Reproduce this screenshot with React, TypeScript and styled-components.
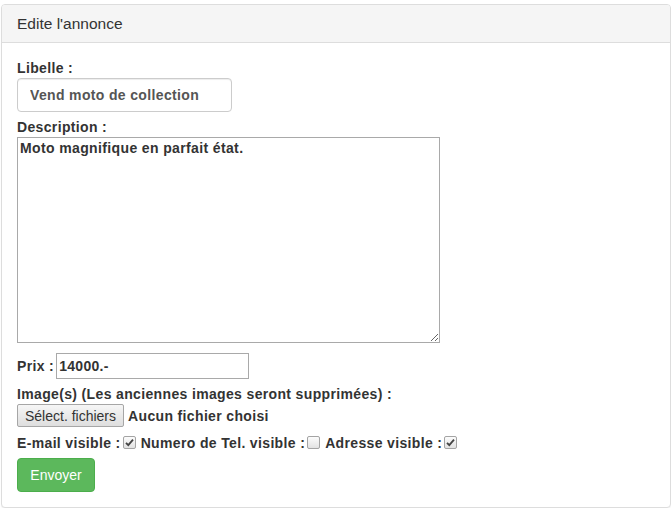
import React from "react";
import styled, { createGlobalStyle } from "styled-components";

const Global = createGlobalStyle`
  html, body { margin: 0; padding: 0; background: #fff; }
  body {
    font-family: "Liberation Sans", Arial, sans-serif;
    font-size: 14px;
    line-height: 20px;
    color: #333;
  }
  * { box-sizing: border-box; }
`;

const Panel = styled.div`
  margin: 4px 0 0 1px;
  width: 670px;
  border: 1px solid #ddd;
  border-radius: 4px;
  background: #fff;
  box-shadow: 0 1px 1px rgba(0, 0, 0, 0.05);
`;

const PanelHeading = styled.div`
  padding: 10px 15px;
  background: #f5f5f5;
  border-bottom: 1px solid #ddd;
  border-radius: 3px 3px 0 0;
`;

const PanelTitle = styled.h3`
  margin: 0;
  font-size: 15.5px;
  font-weight: 400;
  line-height: 17px;
  color: #333;
`;

const PanelBody = styled.form`
  padding: 15px;
  display: flex;
  flex-direction: column;
  align-items: flex-start;
`;

const FieldLabel = styled.label<{ $mt?: number }>`
  display: block;
  font-weight: 700;
  line-height: 20px;
  letter-spacing: 0.35px;
  margin-top: ${(p) => p.$mt ?? 0}px;
`;

const TextInput = styled.input`
  width: 215px;
  height: 34px;
  padding: 6px 12px;
  border: 1px solid #ccc;
  border-radius: 4px;
  font-family: inherit;
  font-size: 14px;
  font-weight: 700;
  letter-spacing: 0.35px;
  color: #555;
  box-shadow: inset 0 1px 1px rgba(0, 0, 0, 0.075);
  outline: none;
`;

const TextArea = styled.textarea`
  width: 423px;
  height: 206px;
  padding: 2px;
  border: 1px solid #a9a9a9;
  font-family: inherit;
  font-size: 14px;
  font-weight: 700;
  letter-spacing: 0.37px;
  line-height: 17px;
  color: #333;
  resize: both;
  outline: none;
`;

const InlineRow = styled.div<{ $mt?: number }>`
  display: flex;
  align-items: center;
  margin-top: ${(p) => p.$mt ?? 0}px;
  font-weight: 700;
  letter-spacing: 0.35px;
  line-height: 20px;
  white-space: pre;
`;

const PriceInput = styled.input`
  width: 193px;
  height: 26px;
  margin-left: 2px;
  padding: 1px 2px;
  border: 1px solid #a9a9a9;
  font-family: inherit;
  font-size: 14px;
  font-weight: 700;
  letter-spacing: 0.3px;
  color: #333;
  outline: none;
`;

const FileButton = styled.button`
  height: 23px;
  padding: 0 7px;
  border: 1px solid #a6a6a6;
  border-radius: 2px;
  background: linear-gradient(#f6f6f6, #dedede);
  font-family: inherit;
  font-size: 14px;
  font-weight: 400;
  letter-spacing: normal;
  color: #333;
  margin-right: 4px;
`;

const Check = styled.span`
  display: inline-flex;
  align-items: center;
  justify-content: center;
  width: 13px;
  height: 13px;
  margin: 0 5px 2px 2px;
  border: 1px solid #a4a4a4;
  border-radius: 2px;
  background: linear-gradient(#fcfcfc, #e2e2e2);
`;

const SubmitButton = styled.button`
  margin-top: 5px;
  width: 78px;
  height: 34px;
  padding: 6px 12px;
  border: 1px solid #4cae4c;
  border-radius: 4px;
  background: #5cb85c;
  color: #fff;
  font-family: inherit;
  font-size: 14px;
  font-weight: 400;
  line-height: 20px;
`;

function CheckBox({ checked }: { checked?: boolean }) {
  return (
    <Check role="checkbox" aria-checked={!!checked}>
      {checked && (
        <svg width="9" height="9" viewBox="0 0 9 9">
          <path d="M1 4.8 L3.3 7.2 L8 1.6" fill="none" stroke="#444" strokeWidth="1.8" />
        </svg>
      )}
    </Check>
  );
}

export default function App() {
  return (
    <>
      <Global />
      <Panel>
        <PanelHeading>
          <PanelTitle>Edite l'annonce</PanelTitle>
        </PanelHeading>
        <PanelBody onSubmit={(e) => e.preventDefault()}>
          <FieldLabel>Libelle :</FieldLabel>
          <TextInput defaultValue="Vend moto de collection" />
          <FieldLabel $mt={5}>Description :</FieldLabel>
          <TextArea defaultValue="Moto magnifique en parfait état." />
          <InlineRow $mt={10}>
            Prix :<PriceInput defaultValue="14000.-" />
          </InlineRow>
          <FieldLabel $mt={5}>Image(s) (Les anciennes images seront supprimées) :</FieldLabel>
          <InlineRow $mt={0}>
            <FileButton type="button">Sélect. fichiers</FileButton>
            Aucun fichier choisi
          </InlineRow>
          <InlineRow $mt={6}>
            E-mail visible :<CheckBox checked />Numero de Tel. visible :<CheckBox />Adresse visible :<CheckBox checked />
          </InlineRow>
          <SubmitButton type="submit">Envoyer</SubmitButton>
        </PanelBody>
      </Panel>
    </>
  );
}
